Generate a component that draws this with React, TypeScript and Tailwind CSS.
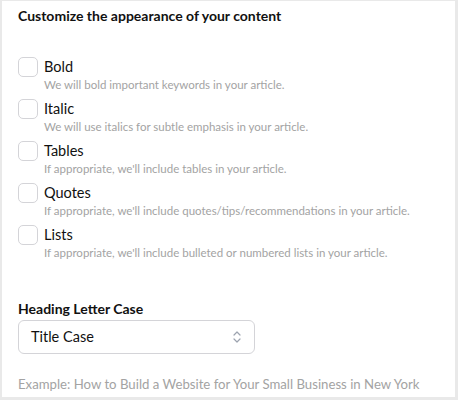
const OPTIONS = [
  { label: 'Bold', desc: 'We will bold important keywords in your article.' },
  { label: 'Italic', desc: 'We will use italics for subtle emphasis in your article.' },
  { label: 'Tables', desc: "If appropriate, we'll include tables in your article." },
  { label: 'Quotes', desc: "If appropriate, we'll include quotes/tips/recommendations in your article." },
  { label: 'Lists', desc: "If appropriate, we'll include bulleted or numbered lists in your article." },
];

function UpDown() {
  return (
    <svg width="10" height="14" viewBox="0 0 10 14" fill="none" aria-hidden="true">
      <path d="M2 5 L5 2 L8 5" stroke="#9ca3af" strokeWidth="1.2" strokeLinecap="round" strokeLinejoin="round" />
      <path d="M2 9 L5 12 L8 9" stroke="#9ca3af" strokeWidth="1.2" strokeLinecap="round" strokeLinejoin="round" />
    </svg>
  );
}

export default function App() {
  return (
    <div className="h-[400px] w-[458px] bg-[#e9e9e9] pl-[2px] pr-[3px] pt-px font-['Lato',sans-serif]">
      <div className="h-[396px] bg-white px-4 pt-[4px]">
        <h2 className="text-[14px] font-bold leading-[22px] text-[#111]">
          Customize the appearance of your content
        </h2>

        <div className="mt-[29px] flex flex-col">
          {OPTIONS.map((o) => (
            <label key={o.label} className="flex h-[42px] items-start gap-[6px]">
              <span className="mt-px h-5 w-5 shrink-0 rounded-[5px] border border-[#d4d4d8] bg-white" />
              <span className="flex flex-col">
                <span className="text-[14.5px] leading-[22px] text-[#111]">{o.label}</span>
                <span className="text-[11.5px] leading-[14px] text-[#a3a3a3]">{o.desc}</span>
              </span>
            </label>
          ))}
        </div>

        <div className="mt-[33px] text-[14px] font-bold leading-[20px] text-[#111]">
          Heading Letter Case
        </div>
        <button className="mt-px flex h-[34px] w-[237px] items-center justify-between rounded-[6px] border border-[#d4d4d8] bg-white pl-3 pr-[12px] text-[14.5px] text-[#111]">
          <span>Title Case</span>
          <UpDown />
        </button>

        <p className="mt-[20px] whitespace-nowrap text-[13.2px] leading-[20px] text-[#a3a3a3]">
          Example: How to Build a Website for Your Small Business in New York
        </p>
      </div>
    </div>
  );
}
